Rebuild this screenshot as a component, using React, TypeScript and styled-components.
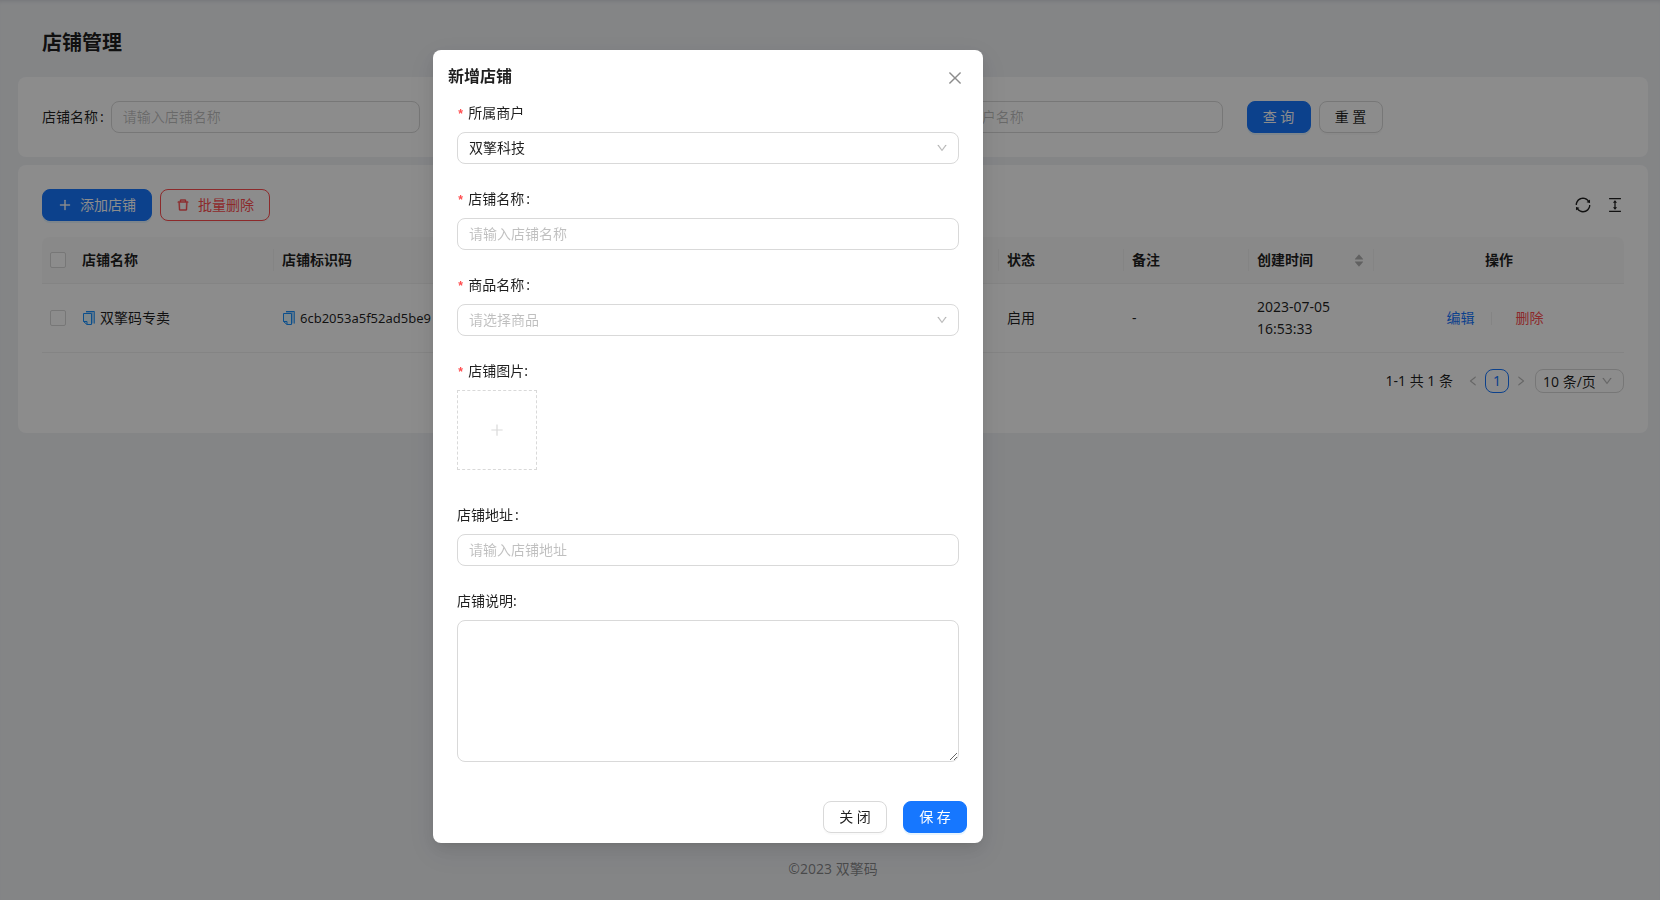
import React from "react";
import styled, { createGlobalStyle, css } from "styled-components";
import {
  AiFillCaretDown,
  AiFillCaretUp,
  AiOutlineClose,
  AiOutlineColumnHeight,
  AiOutlineDelete,
  AiOutlineDown,
  AiOutlineLeft,
  AiOutlinePlus,
  AiOutlineRight,
  AiOutlineSync,
} from "react-icons/ai";

const color = {
  primary: "#1677ff",
  danger: "#ff4d4f",
  text: "rgba(0, 0, 0, 0.88)",
  secondary: "rgba(0, 0, 0, 0.45)",
  placeholder: "rgba(0, 0, 0, 0.25)",
  border: "#d9d9d9",
  split: "#f0f0f0",
};

const radius = "8px";

const GlobalStyle = createGlobalStyle`
  *, *::before, *::after { box-sizing: border-box; }
  body {
    margin: 0;
    background: #f0f2f5;
    color: ${color.text};
    font: 14px/22px "Noto Sans", "Noto Sans CJK SC", sans-serif;
  }
  button, input, select, textarea { font: inherit; color: inherit; }
  button { cursor: pointer; }
  svg { display: block; flex: none; }
`;

/* ---------- shared controls ---------- */

const field = css`
  width: 100%;
  min-width: 0;
  border: 1px solid ${color.border};
  border-radius: ${radius};
  background: #fff;
  outline: none;
  &::placeholder { color: ${color.placeholder}; opacity: 1; }
  &:focus { border-color: ${color.primary}; }
`;

const TextInput = styled.input`
  ${field}
  height: 32px;
  padding: 3px 11px 5px;
`;

const TextArea = styled.textarea`
  ${field}
  display: block;
  min-height: 142px;
  padding: 4px 11px;
  resize: vertical;
`;

const SelectBox = styled.div`
  display: grid;
  align-items: center;
  > * { grid-area: 1 / 1; }
  > svg {
    justify-self: end;
    margin-right: 11px;
    color: ${color.placeholder};
    font-size: 12px;
    stroke-width: 20px;
    pointer-events: none;
  }
`;

const NativeSelect = styled.select<{ $compact?: boolean; $empty?: boolean }>`
  ${field}
  appearance: none;
  height: ${(p) => (p.$compact ? 24 : 32)}px;
  padding: ${(p) => (p.$compact ? "0 28px 2px 7px" : "0 28px 1px 11px")};
  ${(p) => p.$empty && `color: ${color.placeholder};`}
`;

const Button = styled.button<{ $kind?: "primary" | "danger" }>`
  display: inline-flex;
  align-items: center;
  justify-content: center;
  gap: 8px;
  min-width: 64px;
  height: 32px;
  padding: 0 15px;
  border: 1px solid ${color.border};
  border-radius: ${radius};
  background: #fff;
  box-shadow: 0 2px 0 rgba(0, 0, 0, 0.02);
  white-space: nowrap;
  svg {
    stroke: currentColor;
    stroke-width: 30px;
  }
  ${(p) =>
    p.$kind === "primary" &&
    `border-color: ${color.primary}; background: ${color.primary}; color: #fff; box-shadow: 0 2px 0 rgba(5, 145, 255, 0.1);`}
  ${(p) => p.$kind === "danger" && `border-color: ${color.danger}; color: ${color.danger};`}
`;

const IconButton = styled.button`
  display: inline-flex;
  align-items: center;
  justify-content: center;
  padding: 0;
  border: 0;
  background: none;
`;

/* ---------- page ---------- */

const Layout = styled.div`
  display: flex;
  flex-direction: column;
  min-height: 100vh;
  padding: 0 12px 0 18px;
  box-shadow: inset 0 4px 4px -3px rgba(0, 21, 41, 0.12);
`;

const PageTitle = styled.h1`
  margin: 0;
  padding: 27px 24px 18px;
  font-size: 20px;
  line-height: 32px;
  font-weight: 600;
`;

const Card = styled.section`
  padding: 24px;
  border-radius: 8px;
  background: #fff;
  & + & { margin-top: 8px; }
`;

const SearchForm = styled.form`
  display: grid;
  grid-template-columns: repeat(4, minmax(0, 1fr));
  column-gap: 24px;
`;

const SearchItem = styled.div<{ $column: number }>`
  grid-column: ${(p) => p.$column};
  display: flex;
  align-items: center;
  gap: 7px;
`;

const Toolbar = styled.div`
  display: flex;
  align-items: center;
  justify-content: space-between;
  margin-bottom: 16px;
`;

const Actions = styled.div`
  display: flex;
  gap: 8px;
`;

const Tools = styled(Actions)`
  gap: 14px;
  font-size: 18px;
`;

const Table = styled.table`
  width: 100%;
  table-layout: fixed;
  border-collapse: separate;
  border-spacing: 0;
  text-align: left;
`;

const HeadCell = styled.th<{ $divider?: boolean; $center?: boolean }>`
  padding: 12px 0;
  border-bottom: 1px solid ${color.split};
  background: #fafafa;
  font-weight: 600;
  &:first-child { border-top-left-radius: 8px; }
  &:last-child { border-top-right-radius: 8px; }
  > div {
    display: flex;
    align-items: center;
    justify-content: ${(p) => (p.$center ? "center" : "space-between")};
    height: 22px;
    padding: 0 8px;
    border-right: ${(p) => (p.$divider ? `1px solid ${color.split}` : "0")};
  }
`;

const Cell = styled.td`
  padding: 12px 8px;
  border-bottom: 1px solid ${color.split};
`;

const Sorter = styled.span`
  display: flex;
  flex-direction: column;
  color: rgba(0, 0, 0, 0.29);
  font-size: 12px;
  svg + svg { margin-top: -5px; }
`;

const Checkbox = styled.input`
  appearance: none;
  display: block;
  width: 16px;
  height: 16px;
  margin: 0;
  border: 1px solid ${color.border};
  border-radius: 2px;
  background: #fff;
  &:checked { background: ${color.primary}; }
`;

const Copyable = styled.span<{ $code?: boolean }>`
  display: flex;
  align-items: center;
  gap: 4px;
  font-size: ${(p) => (p.$code ? 13 : 14)}px;
  ${IconButton} { width: 14px; }
`;

const RowActions = styled.div`
  display: flex;
  align-items: center;
  justify-content: center;
  padding-right: 8px;
`;

const RowLink = styled.a<{ $danger?: boolean }>`
  color: ${(p) => (p.$danger ? color.danger : color.primary)};
  text-decoration: none;
`;

const Divider = styled.span`
  width: 1px;
  height: 13px;
  margin: 0 24px 0 16px;
  background: ${color.split};
`;

const Pagination = styled.nav`
  display: flex;
  align-items: center;
  justify-content: flex-end;
  margin: 16px 0;
  line-height: 24px;
`;

const Total = styled.span`
  margin-right: 8px;
`;

const PageButton = styled.button<{ $active?: boolean }>`
  display: flex;
  align-items: center;
  justify-content: center;
  width: 24px;
  height: 24px;
  padding: 0;
  border: 1px solid ${(p) => (p.$active ? color.primary : "transparent")};
  border-radius: ${radius};
  background: none;
  color: ${(p) => (p.$active ? color.primary : color.placeholder)};
  svg {
    font-size: 12px;
    stroke-width: 20px;
  }
`;

const PageSize = styled.div`
  width: 89px;
  margin-left: 2px;
`;

const Footer = styled.footer`
  margin-top: auto;
  padding-bottom: 20px;
  color: ${color.secondary};
  text-align: center;
`;

/* ---------- dialog ---------- */

const Mask = styled.div`
  position: fixed;
  inset: 0;
  overflow: auto;
  display: flex;
  justify-content: center;
  align-items: flex-start;
  padding: 50px 244px 24px 0;
  background: rgba(0, 0, 0, 0.45);
`;

const Dialog = styled.div`
  width: 550px;
  border-radius: 8px;
  background: #fff;
  box-shadow: 0 6px 16px 0 rgba(0, 0, 0, 0.08), 0 3px 6px -4px rgba(0, 0, 0, 0.12),
    0 9px 28px 8px rgba(0, 0, 0, 0.05);
`;

const DialogHeader = styled.header`
  display: flex;
  align-items: center;
  justify-content: space-between;
  padding: 14px 19px 14px 15px;
  ${IconButton} {
    padding-top: 4px;
    color: ${color.secondary};
    font-size: 18px;
  }
`;

const DialogTitle = styled.h2`
  margin: 0;
  font-size: 16px;
  line-height: 24px;
  font-weight: 600;
`;

const DialogForm = styled.form`
  display: flex;
  flex-direction: column;
  gap: 24px;
  padding: 0 24px;
`;

const FormItem = styled.div`
  display: flex;
  flex-direction: column;
  gap: 8px;
`;

const Label = styled.label<{ $required?: boolean; $colon?: boolean }>`
  flex: none;
  ${(p) =>
    p.$required &&
    css`
      &::before {
        content: "*";
        margin-right: 4px;
        color: ${color.danger};
        font-family: "Liberation Mono", monospace;
        font-size: 12px;
        font-weight: 700;
        line-height: 1;
      }
    `}
  ${(p) =>
    p.$colon &&
    css`
      &::after {
        content: ":";
        margin-left: 2px;
      }
    `}
`;

const UploadTile = styled.button`
  display: flex;
  align-items: center;
  justify-content: center;
  width: 80px;
  height: 80px;
  margin-bottom: 10px;
  border: 1px dashed ${color.border};
  background: none;
  color: ${color.border};
  font-size: 16px;
`;

const DialogFooter = styled.footer`
  display: flex;
  justify-content: flex-end;
  gap: 16px;
  padding: 39px 16px 10px;
`;

function CopyIcon() {
  return (
    <svg width="12" height="14" viewBox="0 0 12 14" fill="none" stroke="#1890ff">
      <path d="M3 .5H11.5V12.5H8.5V2.5H3Z" fill="#a3d3ff" stroke="none" />
      <path d="M3 .5H11.5" />
      <path d="M11.5 .5V12.5" stroke="#4dabff" />
      <path d="M.5 2.5H8.5V13.5H4L.5 10.5Z" fill="#e6f7ff" />
      <path d="M.5 10.5H4V13.5" />
    </svg>
  );
}

function CopyText({ children, code }: { children: string; code?: boolean }) {
  return (
    <Copyable $code={code}>
      <IconButton type="button" aria-label="复制">
        <CopyIcon />
      </IconButton>
      {children}
    </Copyable>
  );
}

function SearchPanel() {
  return (
    <Card>
      <SearchForm>
        <SearchItem $column={1}>
          <Label htmlFor="q-shop" $colon>店铺名称</Label>
          <TextInput id="q-shop" placeholder="请输入店铺名称" />
        </SearchItem>
        <SearchItem $column={3}>
          <Label htmlFor="q-merchant" $colon>商户名称</Label>
          <TextInput id="q-merchant" placeholder="请输入商户名称" />
        </SearchItem>
        <Actions>
          <Button type="button" $kind="primary">查 询</Button>
          <Button type="reset">重 置</Button>
        </Actions>
      </SearchForm>
    </Card>
  );
}

const columnWidths = [32, 200, undefined, 125, 125, 125, 250];

function ShopTable() {
  return (
    <Table>
      <colgroup>
        {columnWidths.map((width, i) => (
          <col key={i} width={width} />
        ))}
      </colgroup>
      <thead>
        <tr>
          <HeadCell><div><Checkbox type="checkbox" aria-label="全选" /></div></HeadCell>
          <HeadCell $divider><div>店铺名称</div></HeadCell>
          <HeadCell $divider><div>店铺标识码</div></HeadCell>
          <HeadCell $divider><div>状态</div></HeadCell>
          <HeadCell $divider><div>备注</div></HeadCell>
          <HeadCell $divider>
            <div>
              创建时间
              <Sorter><AiFillCaretUp /><AiFillCaretDown /></Sorter>
            </div>
          </HeadCell>
          <HeadCell $center><div>操作</div></HeadCell>
        </tr>
      </thead>
      <tbody>
        <tr>
          <Cell><Checkbox type="checkbox" aria-label="双擎码专卖" /></Cell>
          <Cell><CopyText>双擎码专卖</CopyText></Cell>
          <Cell><CopyText code>6cb2053a5f52ad5be9</CopyText></Cell>
          <Cell>启用</Cell>
          <Cell>-</Cell>
          <Cell>2023-07-05 16:53:33</Cell>
          <Cell>
            <RowActions>
              <RowLink href="#edit">编辑</RowLink>
              <Divider />
              <RowLink href="#delete" $danger>删除</RowLink>
            </RowActions>
          </Cell>
        </tr>
      </tbody>
    </Table>
  );
}

function ShopDialog() {
  return (
    <Mask>
      <Dialog role="dialog" aria-modal="true" aria-labelledby="dialog-title">
        <DialogHeader>
          <DialogTitle id="dialog-title">新增店铺</DialogTitle>
          <IconButton type="button" aria-label="关闭"><AiOutlineClose /></IconButton>
        </DialogHeader>
        <DialogForm id="shop-form">
          <FormItem>
            <Label htmlFor="merchant" $required>所属商户</Label>
            <SelectBox>
              <NativeSelect id="merchant"><option>双擎科技</option></NativeSelect>
              <AiOutlineDown />
            </SelectBox>
          </FormItem>
          <FormItem>
            <Label htmlFor="name" $required $colon>店铺名称</Label>
            <TextInput id="name" placeholder="请输入店铺名称" />
          </FormItem>
          <FormItem>
            <Label htmlFor="goods" $required $colon>商品名称</Label>
            <SelectBox>
              <NativeSelect id="goods" $empty><option>请选择商品</option></NativeSelect>
              <AiOutlineDown />
            </SelectBox>
          </FormItem>
          <FormItem>
            <Label htmlFor="picture" $required>店铺图片:</Label>
            <UploadTile id="picture" type="button"><AiOutlinePlus /></UploadTile>
          </FormItem>
          <FormItem>
            <Label htmlFor="address" $colon>店铺地址</Label>
            <TextInput id="address" placeholder="请输入店铺地址" />
          </FormItem>
          <FormItem>
            <Label htmlFor="note">店铺说明:</Label>
            <TextArea id="note" rows={6} />
          </FormItem>
        </DialogForm>
        <DialogFooter>
          <Button type="button">关 闭</Button>
          <Button type="submit" form="shop-form" $kind="primary">保 存</Button>
        </DialogFooter>
      </Dialog>
    </Mask>
  );
}

export default function App() {
  return (
    <>
      <GlobalStyle />
      <Layout>
        <PageTitle>店铺管理</PageTitle>
        <SearchPanel />
        <Card>
          <Toolbar>
            <Actions>
              <Button type="button" $kind="primary"><AiOutlinePlus />添加店铺</Button>
              <Button type="button" $kind="danger"><AiOutlineDelete />批量删除</Button>
            </Actions>
            <Tools>
              <IconButton type="button" aria-label="刷新"><AiOutlineSync /></IconButton>
              <IconButton type="button" aria-label="密度"><AiOutlineColumnHeight /></IconButton>
            </Tools>
          </Toolbar>
          <ShopTable />
          <Pagination aria-label="分页">
            <Total>1-1 共 1 条</Total>
            <PageButton type="button" aria-label="上一页"><AiOutlineLeft /></PageButton>
            <PageButton type="button" $active>1</PageButton>
            <PageButton type="button" aria-label="下一页"><AiOutlineRight /></PageButton>
            <PageSize>
              <SelectBox>
                <NativeSelect $compact aria-label="每页条数"><option>10 条/页</option></NativeSelect>
                <AiOutlineDown />
              </SelectBox>
            </PageSize>
          </Pagination>
        </Card>
        <Footer>©2023 双擎码</Footer>
      </Layout>
      <ShopDialog />
    </>
  );
}
